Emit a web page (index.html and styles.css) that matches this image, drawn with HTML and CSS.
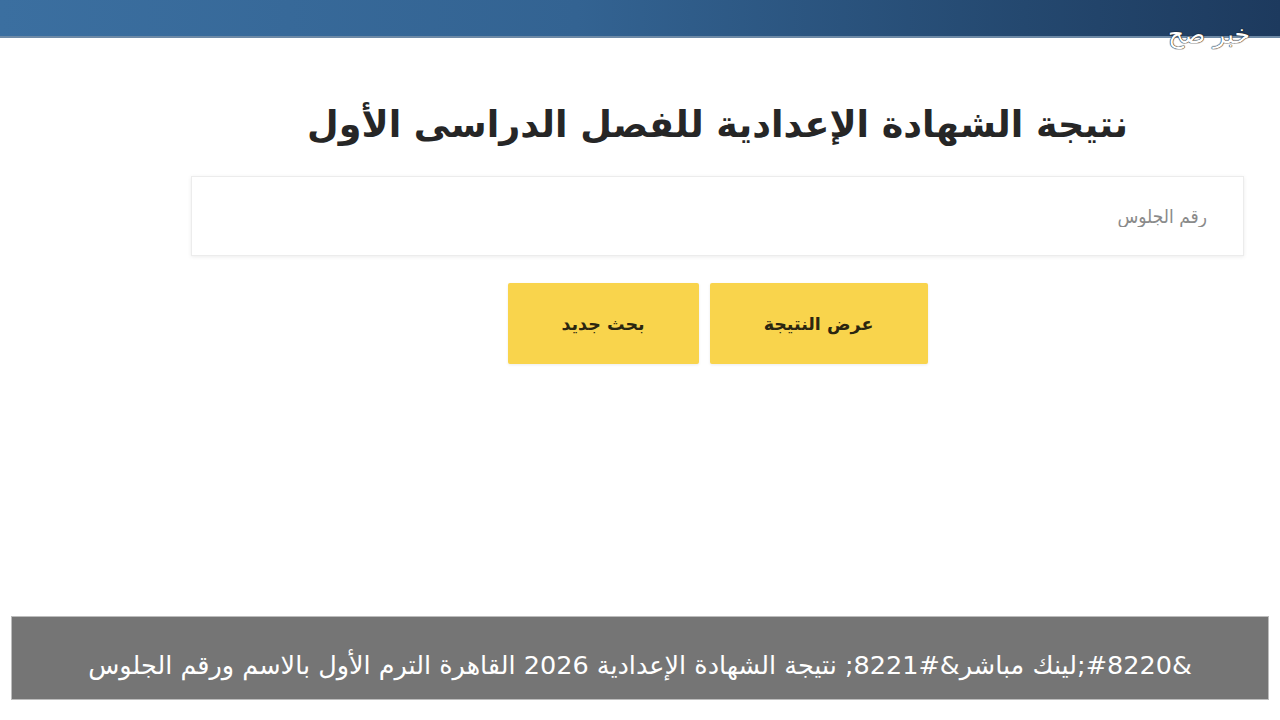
FILE: index.html
```html
<!DOCTYPE html>
<html lang="ar" dir="rtl">
<head>
  <meta charset="UTF-8" />
  <title>نتيجة الشهادة الإعدادية</title>
  <link rel="stylesheet" href="styles.css">
</head>
<body>
  <div class="top-bar"></div>
  <div class="watermark">خبر صح</div>

  <div class="result-form">
    <h1 class="form-title">نتيجة الشهادة الإعدادية للفصل الدراسى الأول</h1>
    <div class="seat-input">
      <input type="text" placeholder="رقم الجلوس">
    </div>
    <div class="form-actions">
      <button class="yellow-btn show-btn">عرض النتيجة</button>
      <button class="yellow-btn new-btn">بحث جديد</button>
    </div>
  </div>

  <div class="caption">
    <p>&amp;#8220;لينك مباشر&amp;#8221; نتيجة الشهادة الإعدادية 2026 القاهرة الترم الأول بالاسم ورقم الجلوس</p>
  </div>
</body>
</html>
```

FILE: styles.css
```css
* { box-sizing: border-box; }
html, body {
  margin: 0;
  height: 100%;
}
body {
  background: #fff;
  font-family: "DejaVu Sans", sans-serif;
  position: relative;
  overflow: hidden;
}
.top-bar {
  height: 38px;
  background: linear-gradient(90deg, #3b6fa0 0%, #336392 45%, #24486f 80%, #1d3a5e 100%);
  border-bottom: 2px solid #6e8aa6;
}
.watermark {
  position: absolute;
  top: 20px;
  right: 30px;
  color: #fff;
  font-size: 25px;
  font-weight: normal;
  font-family: "DejaVu Sans", sans-serif;
  text-shadow: 0 0 1px #222, 0 0 1px #222, 0 0 1px #222;
}
.result-form {
  width: 1053px;
  margin-right: 36px;
  margin-left: auto;
  display: flex;
  flex-direction: column;
  align-items: center;
}
.form-title {
  margin: 59px 0 0;
  font-size: 36.5px;
  font-weight: bold;
  color: #262626;
  height: 79px;
  line-height: 56px;
}
.seat-input {
  width: 100%;
  height: 80px;
  border: 1px solid #ececec;
  box-shadow: 0 1px 4px rgba(0, 0, 0, 0.08);
  background: #fff;
}
.seat-input input {
  width: 100%;
  height: 100%;
  border: none;
  outline: none;
  padding: 0 36px 0 20px;
  font-family: "DejaVu Sans Condensed", "Liberation Sans Narrow", sans-serif;
  font-size: 19px;
  background: transparent;
}
.seat-input input::placeholder {
  color: #8a8a8a;
}
.form-actions {
  display: flex;
  gap: 11px;
  margin-top: 27px;
}
.yellow-btn {
  height: 81px;
  border: none;
  border-radius: 2px;
  background: #f9d44c;
  color: #2b2610;
  font-family: "DejaVu Sans", sans-serif;
  font-weight: bold;
  font-size: 17.5px;
  box-shadow: 0 1px 3px rgba(0, 0, 0, 0.08);
}
.show-btn { width: 218px; }
.new-btn { width: 191px; }
.caption {
  position: absolute;
  left: 11px;
  right: 11px;
  top: 616px;
  height: 84px;
  background: #757575;
  border: 1px solid #bdbdbd;
  display: flex;
  justify-content: center;
  align-items: center;
}
.caption p {
  margin: 14px 0 0;
  color: #fff;
  font-family: "DejaVu Sans", sans-serif;
  font-size: 25.5px;
  white-space: nowrap;
}
```
